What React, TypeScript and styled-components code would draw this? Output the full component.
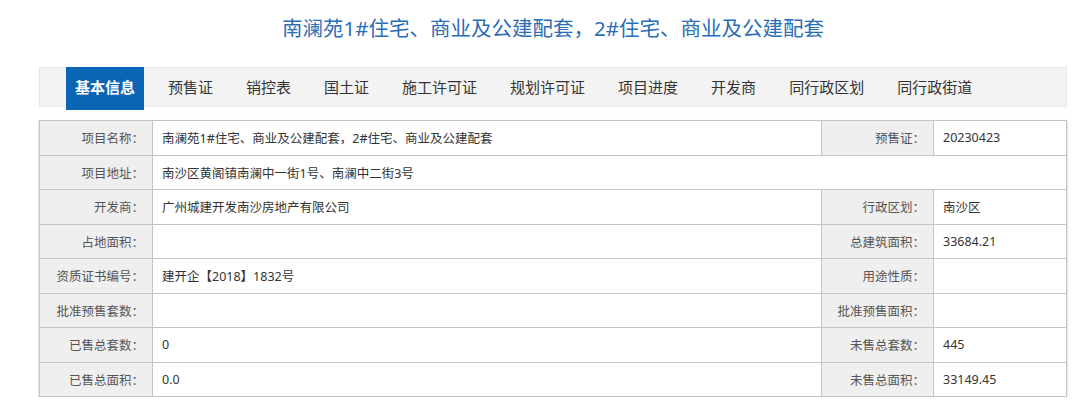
import React from 'react';
import styled, { createGlobalStyle } from 'styled-components';

//----------------------------------------- Data -----------------------------------------//
const tabs = ['基本信息', '预售证', '销控表', '国土证', '施工许可证', '规划许可证', '项目进度', '开发商', '同行政区划', '同行政街道'];

type Row = { label: string; value: string; label2?: string; value2?: string };

const rows: Row[] = [
  { label: '项目名称', value: '南澜苑1#住宅、商业及公建配套，2#住宅、商业及公建配套', label2: '预售证', value2: '20230423' },
  { label: '项目地址', value: '南沙区黄阁镇南澜中一街1号、南澜中二街3号' },
  { label: '开发商', value: '广州城建开发南沙房地产有限公司', label2: '行政区划', value2: '南沙区' },
  { label: '占地面积', value: '', label2: '总建筑面积', value2: '33684.21' },
  { label: '资质证书编号', value: '建开企【2018】1832号', label2: '用途性质', value2: '' },
  { label: '批准预售套数', value: '', label2: '批准预售面积', value2: '' },
  { label: '已售总套数', value: '0', label2: '未售总套数', value2: '445' },
  { label: '已售总面积', value: '0.0', label2: '未售总面积', value2: '33149.45' },
];

//----------------------------------------- Component -----------------------------------------//
const App: React.FC = () => {
  return (
    <>
      <GlobalStyle />
      <Page>
        <Title>南澜苑1#住宅、商业及公建配套，2#住宅、商业及公建配套</Title>
        <TabBar>
          {tabs.map((t, i) => (
            <Tab key={t} active={i === 0}>{t}</Tab>
          ))}
        </TabBar>
        <InfoTable>
          <colgroup>
            <col style={{ width: 113 }} />
            <col style={{ width: 669 }} />
            <col style={{ width: 112 }} />
            <col />
          </colgroup>
          <tbody>
            {rows.map((r) => (
              <tr key={r.label}>
                <Label>{r.label}：</Label>
                {r.label2 === undefined ? (
                  <Value colSpan={3}>{r.value}</Value>
                ) : (
                  <>
                    <Value>{r.value}</Value>
                    <Label>{r.label2}：</Label>
                    <Value>{r.value2}</Value>
                  </>
                )}
              </tr>
            ))}
          </tbody>
        </InfoTable>
      </Page>
    </>
  );
};

export default App;

//----------------------------------------- Style -----------------------------------------//
const GlobalStyle = createGlobalStyle`
    body {
        margin: 0;
        background: #ffffff;
        font-family: "Noto Sans", "Noto Sans CJK SC", sans-serif;
    }
`;

const Page = styled.div`
    width: 1028px;
    padding: 14px 0 0 39px;
`;

const Title = styled.h1`
    margin: 0 0 25px;
    font-size: 20.5px;
    line-height: 28px;
    font-weight: normal;
    text-align: center;
    color: #2b6db6;
`;

const TabBar = styled.ul`
    display: flex;
    align-items: flex-start;
    gap: 15px;
    height: 40px;
    margin: 0;
    padding: 0 0 0 27px;
    list-style: none;
    background: #f3f3f3;
    box-shadow: inset 0 0 0 1px #e8e8e8;
`;

const Tab = styled.li<{ active: boolean }>`
    padding: 0 9px;
    height: ${(p) => (p.active ? '43px' : '40px')};
    line-height: 40px;
    font-size: 15px;
    font-weight: ${(p) => (p.active ? 'bold' : 'normal')};
    color: ${(p) => (p.active ? '#ffffff' : '#333333')};
    background: ${(p) => (p.active ? '#0b65b5' : 'transparent')};
    cursor: pointer;
`;

const InfoTable = styled.table`
    width: 1028px;
    margin-top: 13px;
    border-collapse: collapse;
    table-layout: fixed;
    border: 1px solid #b4b4b4;
    box-shadow: 0 1px 2px rgba(0, 0, 0, 0.25);
`;

const Label = styled.td`
    height: 33.5px;
    padding: 0 8px 0 0;
    border: 1px solid #c4c4c4;
    background: #efefef;
    text-align: right;
    font-size: 12.5px;
    color: #555555;
    white-space: nowrap;
`;

const Value = styled.td`
    height: 33.5px;
    padding: 0 0 0 9px;
    border: 1px solid #c4c4c4;
    background: #ffffff;
    font-size: 12.5px;
    color: #333333;
    white-space: nowrap;
`;
